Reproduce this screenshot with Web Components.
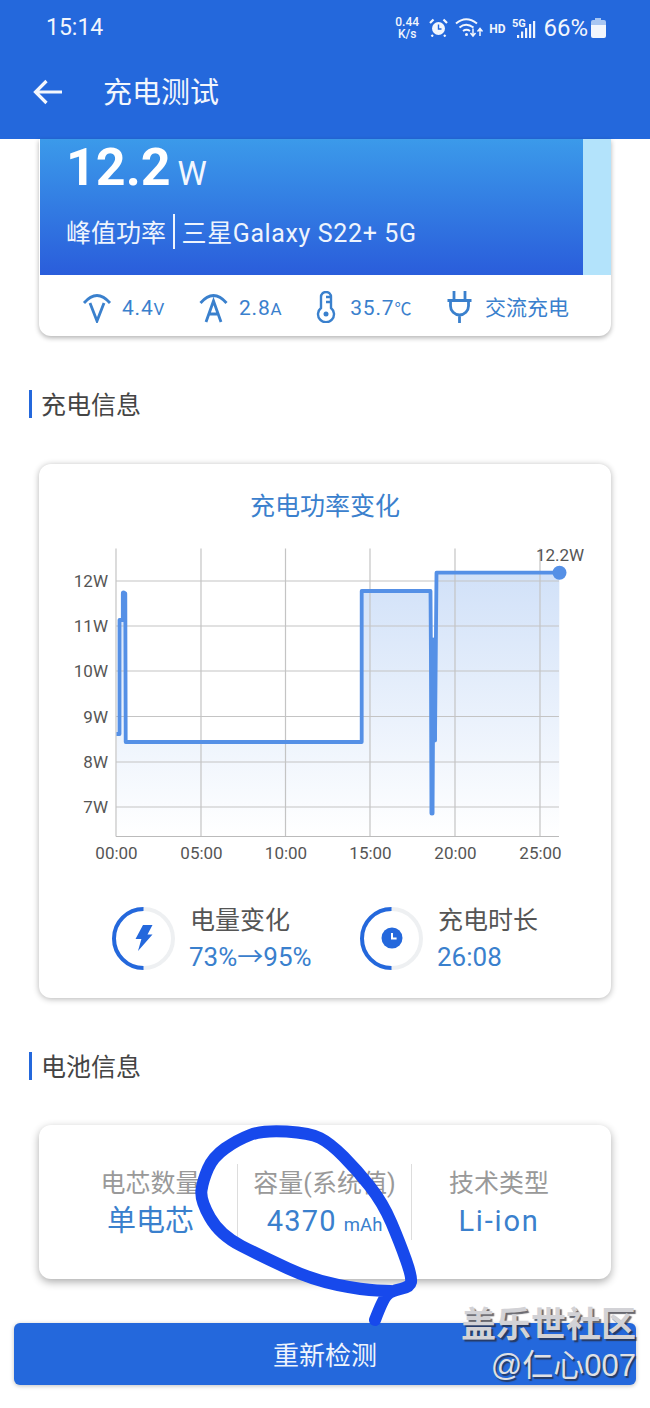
<!DOCTYPE html>
<html lang="zh">
<head>
<meta charset="utf-8">
<title>充电测试</title>
<style>
  html, body { margin: 0; background: #fff; }
  body { font-family: Roboto, "Noto Sans CJK SC", sans-serif; }
</style>
</head>
<body>
<x-app>
  <x-status-bar></x-status-bar>
  <x-app-bar>充电测试</x-app-bar>
  <x-hero-card></x-hero-card>
  <x-section-title style="margin-top:54px">充电信息</x-section-title>
  <x-chart-card style="margin-top:46px">
    <x-stat>
      <svg slot="icon" width="18" height="26" viewBox="0 0 18 26"><path fill="#2468dc" d="M8 0h9.500l-5 9.500h5L3 26l3.400-12H0.500z"/></svg>
      <span slot="label">电量变化</span>
      <span slot="value">73%→95%</span>
    </x-stat>
    <x-stat>
      <svg slot="icon" width="22" height="22" viewBox="0 0 22 22"><circle cx="11" cy="11" r="10.500" fill="#2468dc"/><path d="M11 6v5.600h4.600" fill="none" stroke="#fff" stroke-width="2"/></svg>
      <span slot="label">充电时长</span>
      <span slot="value">26:08</span>
    </x-stat>
  </x-chart-card>
  <x-section-title style="margin-top:54px">电池信息</x-section-title>
  <x-battery-card style="margin-top:45px">
    <x-spec label="电芯数量">单电芯</x-spec>
    <x-spec label="容量(系统值)"><span style="letter-spacing:1.200px">4370</span> <small style="font-size:18.500px">mAh</small></x-spec>
    <x-spec label="技术类型"><span style="letter-spacing:1.800px">Li-ion</span></x-spec>
  </x-battery-card>
  <x-action-button style="margin-top:44px">重新检测</x-action-button>
  <x-scribble slot="over"></x-scribble>
  <x-watermark slot="over"></x-watermark>
</x-app>

<script>
(function() {

  const FONT = 'Roboto, "Noto Sans CJK SC", sans-serif';
  const BLUE = '#2468dc';
  const TEXT_BLUE = '#3a80cd';

  function ui(tag, css, html) {
    customElements.define(tag, class extends HTMLElement {
      constructor() {
        super();
        this.attachShadow({ mode: 'open' }).innerHTML =
          `<style>${ css }</style>${ typeof html === 'function' ? html(this) : html }`;
      }
    });
  }

  ui('x-app', `
    :host {
      display: block;
      position: relative;
      width: 650px;
      height: 1408px;
      overflow: hidden;
      background: #fff;
      font-family: ${ FONT };
    }
    .flow { display: flex; flex-direction: column; }
  `, `<div class="flow"><slot></slot></div><slot name="over"></slot>`);

  ui('x-status-bar', `
    :host {
      display: flex;
      align-items: center;
      height: 55px;
      padding: 0 44px 0 46px;
      background: ${ BLUE };
      color: #f2f6fd;
    }
    .time { font-size: 23px; flex: 1; }
    .net { font-size: 12px; line-height: 12px; font-weight: 500; text-align: center; width: 26px; }
    svg { display: block; }
    .hd { font-size: 12px; font-weight: 700; margin: 2px 0 0 5px; }
    .pct { font-size: 24px; margin-left: 7px; }
  `, `
    <span class="time">15:14</span>
    <div class="net">0.44<br>K/s</div>
    <svg style="margin-left:9px" width="19" height="19" viewBox="0 0 19 19">
      <circle cx="9.500" cy="10.500" r="6.500" fill="#f2f6fd"/>
      <path d="M9.500 6.500v4.500h3" fill="none" stroke="${ BLUE }" stroke-width="1.400"/>
      <path d="M1 5l3.500-3.500M18 5l-3.500-3.500M4 17l-1.500 1.500M15 17l1.500 1.500" stroke="#f2f6fd" stroke-width="2.200" fill="none"/>
    </svg>
    <svg style="margin-left:7px" width="29" height="21" viewBox="0 0 29 21" fill="none" stroke="#f2f6fd" stroke-width="2">
      <path d="M1 6.500Q11-2 22 6.500M4.500 10.500Q11 5 18.500 10.500M8 14q3.500-2.500 7 0"/>
      <circle cx="11.500" cy="17.500" r="1.500" fill="#f2f6fd" stroke="none"/>
      <path d="M18 11.500v7M15.500 16l2.500 3 2.500-3M25 19v-7M22.500 14.500l2.500-3 2.500 3" stroke-width="1.500"/>
    </svg>
    <span class="hd">HD</span>
    <svg style="margin-left:7px" width="24" height="20" viewBox="0 0 24 20">
      <text x="0" y="9" font-family="Roboto, sans-serif" font-size="11" font-weight="700" fill="#f2f6fd">5G</text>
      <path fill="#f2f6fd" d="M5 17h2.200v3H5zM9 13.500h2.200V20H9zM13 10h2.200v10H13zM17 6h2.200v14H17zM21 3h2.200v17H21z"/>
    </svg>
    <span class="pct">66%</span>
    <svg style="margin-left:3px" width="15" height="20" viewBox="0 0 15 20">
      <path fill="#a8c6f2" d="M4 0h6v2h3a2 2 0 0 1 2 2v3H0V4a2 2 0 0 1 2-2h2z"/>
      <path fill="#f2f6fd" d="M0 7h15v11a2 2 0 0 1-2 2H2a2 2 0 0 1-2-2z"/>
    </svg>
  `);

  ui('x-app-bar', `
    :host {
      display: flex;
      align-items: center;
      gap: 41px;
      height: 84px;
      padding: 0 0 11px 33px;
      box-sizing: border-box;
      background: ${ BLUE };
      color: #f2f6fd;
      font-size: 29px;
    }
    svg { display: block; }
    span { margin-top: -3px; }
  `, `
    <svg width="29" height="26" viewBox="0 0 29 26" fill="none" stroke="#f4f7fd" stroke-width="3.200">
      <path d="M29 13H3M13.500 2 2.500 13l11 11"/>
    </svg>
    <span><slot></slot></span>
  `);

  ui('x-hero-card', `
    :host {
      display: block;
      width: 572px;
      margin-left: 39px;
      background: #fff;
      border-radius: 0 0 12px 12px;
      box-shadow: 0 2px 5px rgba(0,0,0,.3);
    }
    .top { display: flex; height: 136px; margin-left: 1px; background: #b3e3fb; }
    .hero {
      width: 543px;
      box-sizing: border-box;
      padding: 3px 0 0 26px;
      background: linear-gradient(#3b9aea, #2a5ddb);
      color: #fff;
    }
    .val { display: flex; align-items: baseline; gap: 7px; height: 52px; line-height: 52px; }
    .val b { font-size: 52px; font-weight: 700; }
    .val span { font-size: 33px; color: #f3f7fe; }
    .sub { display: flex; align-items: center; gap: 7px; height: 36px; margin-top: 19px; font-size: 25px; color: #eef4fd; }
    .sub i { width: 1.500px; height: 35px; background: #eef4fd; }
    .sub em { font-style: normal; letter-spacing: .62px; }
    .row {
      display: flex;
      justify-content: space-between;
      align-items: center;
      height: 61px;
      box-sizing: border-box;
      padding: 2px 42px 0 43px;
      color: ${ TEXT_BLUE };
      font-size: 21px;
    }
    .m { display: flex; align-items: center; }
    .m svg { display: block; fill: none; stroke: ${ TEXT_BLUE }; stroke-width: 2.800; margin-right: 10px; }
    .m span { margin-top: 2px; }
    .m span.cn { margin-top: -2px; }
    .m b { font-weight: 400; letter-spacing: .8px; }
    .m u { text-decoration: none; font-size: 17px; }
  `, `
    <div class="top">
      <div class="hero">
        <div class="val"><b>12.2</b><span>W</span></div>
        <div class="sub"><span>峰值功率</span><i></i><em>三星Galaxy S22+ 5G</em></div>
      </div>
    </div>
    <div class="row">
      <div class="m">
        <svg width="30" height="32" viewBox="0 0 30 32"><path d="M2 12Q15-3 28 12M8 12l7 18 7-18"/></svg>
        <span><b>4.4</b><u>V</u></span>
      </div>
      <div class="m">
        <svg style="margin-right:11px" width="29" height="32" viewBox="0 0 29 32"><path d="M1.500 12Q14.500-3 27.500 12M7 31 14.500 10 22 31M9.500 23h10"/></svg>
        <span><b>2.8</b><u>A</u></span>
      </div>
      <div class="m">
        <svg style="stroke-width:2.400;margin-right:14px" width="20" height="32" viewBox="0 0 20 32">
          <path d="M5 17V6a5 5 0 0 1 10 0v11a8 8 0 1 1-10 0zM10 6h5M10 11h5"/>
          <circle cx="10" cy="23" r="2.500" fill="${ TEXT_BLUE }" stroke="none"/>
        </svg>
        <span><b>35.7</b><u>℃</u></span>
      </div>
      <div class="m">
        <svg style="margin-right:12px" width="27" height="32" viewBox="0 0 27 32"><path d="M8 0v9M19 0v9M1.500 9.500h24M4.500 9.500V15a9 9 0 0 0 18 0V9.500M13.500 24v8"/></svg>
        <span class="cn">交流充电</span>
      </div>
    </div>
  `);

  ui('x-section-title', `
    :host {
      display: flex;
      align-items: center;
      gap: 9px;
      height: 28px;
      margin-left: 29px;
      font-size: 25px;
      color: #444;
    }
    i { width: 3px; height: 28px; background: ${ BLUE }; }
    span { margin-top: -2px; }
  `, `<i></i><span><slot></slot></span>`);

  ui('x-chart-card', `
    :host {
      display: block;
      width: 572px;
      height: 534px;
      margin-left: 39px;
      box-sizing: border-box;
      padding-top: 28px;
      background: #fff;
      border-radius: 12px;
      box-shadow: 0 1px 6px rgba(0,0,0,.3);
    }
    h2 { margin: 0; height: 30px; line-height: 30px; text-align: center; font-size: 25px; font-weight: 400; color: ${ TEXT_BLUE }; }
    .stats { display: flex; padding: 34px 0 0 73px; }
    x-power-chart { margin-top: 8px; }
  `, `
    <h2>充电功率变化</h2>
    <x-power-chart></x-power-chart>
    <div class="stats"><slot></slot></div>
  `);

  ui('x-power-chart', `
    :host { display: block; height: 340px; }
    svg { display: block; }
    text { font-family: Roboto, sans-serif; fill: #555; }
  `, () => {
    const xs = [116, 201, 285.5, 370, 455, 540];
    const ys = [581, 626, 671, 716.5, 762, 807];
    const xl = ['00:00', '05:00', '10:00', '15:00', '20:00', '25:00'];
    const yl = ['12W', '11W', '10W', '9W', '8W', '7W'];
    const pts = 'M116.500 734H119.500V620H122.800V593.500H125.300L125.700 742H361.700V591H430.500L432 813L434 641.700L435 740L436.500 572.700H559.300';
    return `
      <svg width="572" height="340" viewBox="39 530 572 340">
        <defs>
          <linearGradient id="area" gradientUnits="userSpaceOnUse" x1="0" y1="573" x2="0" y2="836">
            <stop offset="0" stop-color="#5590e6" stop-opacity=".27"/>
            <stop offset="1" stop-color="#5590e6" stop-opacity="0"/>
          </linearGradient>
        </defs>
        <path d="${ pts }V836.500H116.500z" fill="url(#area)"/>
        <g stroke="#c4c4c4" stroke-width="1.200" fill="none">
          ${ xs.map(x => `<path d="M${ x } 548.500V836.500"/>`).join('') }
          ${ ys.map(y => `<path d="M116 ${ y }H559"/>`).join('') }
          <path d="M116 836.500H559" stroke="#bbb"/>
        </g>
        <path d="${ pts }" fill="none" stroke="#5590e6" stroke-width="3.800" stroke-linejoin="round"/>
        <path d="M432 640V813M434.300 640V740M123.500 593V616" fill="none" stroke="#5590e6" stroke-width="5" stroke-linecap="round"/>
        <circle cx="559.500" cy="572.700" r="7" fill="#5590e6"/>
        ${ yl.map((t, i) => `<text x="108" y="${ ys[i] + 6 }" text-anchor="end" font-size="17">${ t }</text>`).join('') }
        ${ xl.map((t, i) => `<text x="${ xs[i] + .5 }" y="859" text-anchor="middle" font-size="17">${ t }</text>`).join('') }
        <text x="560" y="561" text-anchor="middle" font-size="17">12.2W</text>
      </svg>
    `;
  });

  ui('x-stat', `
    :host { display: flex; align-items: center; width: 248px; }
    .ring { position: relative; width: 63px; height: 63px; margin-right: 15px; flex: none; display: grid; place-items: center; }
    .ring svg { position: absolute; inset: 0; }
    ::slotted([slot="icon"]) { position: relative; }
    .txt { display: flex; flex-direction: column; gap: 6px; margin-top: 2px; }
    .l { font-size: 25px; line-height: 30px; color: #555; }
    .v { font-size: 26px; line-height: 30px; color: ${ TEXT_BLUE }; margin-left: -1px; }
  `, `
    <div class="ring">
      <svg width="63" height="63" viewBox="0 0 63 63" fill="none" stroke-width="4">
        <circle cx="31.500" cy="31.500" r="29.500" stroke="#eef0f2"/>
        <path d="M31.500 2a29.500 29.500 0 0 0 0 59" stroke="${ BLUE }"/>
      </svg>
      <slot name="icon"></slot>
    </div>
    <div class="txt">
      <div class="l"><slot name="label"></slot></div>
      <div class="v"><slot name="value"></slot></div>
    </div>
  `);

  ui('x-battery-card', `
    :host {
      display: block;
      width: 572px;
      height: 154px;
      margin-left: 39px;
      box-sizing: border-box;
      padding: 39px 25px 0;
      background: #fff;
      border-radius: 12px;
      box-shadow: 0 3px 8px rgba(0,0,0,.33);
    }
    .grid { display: grid; grid-template-columns: repeat(3, 174px); }
    ::slotted(x-spec:not(:last-child)) { border-right: 1px solid #ddd; }
  `, `<div class="grid"><slot></slot></div>`);

  ui('x-spec', `
    :host { display: block; height: 76px; text-align: center; }
    .l { font-size: 25px; line-height: 38px; margin-top: 1px; color: #999; white-space: nowrap; }
    .v { font-size: 29px; line-height: 37px; color: ${ TEXT_BLUE }; white-space: nowrap; }
  `, el => `<div class="l">${ el.getAttribute('label') }</div><div class="v"><slot></slot></div>`);

  ui('x-action-button', `
    :host {
      display: flex;
      align-items: center;
      justify-content: center;
      width: 622px;
      height: 62px;
      box-sizing: border-box;
      padding-bottom: 2px;
      margin-left: 14px;
      background: ${ BLUE };
      border-radius: 6px;
      box-shadow: 0 1px 4px rgba(0,0,0,.25);
      color: #eef4fd;
      font-size: 26px;
    }
  `, `<slot></slot>`);

  ui('x-scribble', `
    :host { position: absolute; inset: 0; pointer-events: none; }
    svg { display: block; }
  `, () => {
    const p = [[375,1320],[383,1299],[391,1291],[410,1287],[412,1277],[400,1243],[383,1203],[357,1170],[330,1143],[310,1133],[263,1130],[237,1140],[213,1157],[203,1180],[200,1200],[220,1235],[263,1257],[313,1280],[363,1290],[391,1291]];
    let d = `M${ p[0] }`;
    for (let i = 1; i < p.length - 1; i++) {
      const mx = (p[i][0] + p[i + 1][0]) / 2, my = (p[i][1] + p[i + 1][1]) / 2;
      d += `Q${ p[i] } ${ mx } ${ my }`;
    }
    d += `L${ p[p.length - 1] }`;
    return `<svg width="650" height="1408"><path d="${ d }" fill="none" stroke="#1749ec" stroke-width="12" stroke-linecap="round" stroke-linejoin="round"/></svg>`;
  });

  ui('x-watermark', `
    :host {
      position: absolute;
      right: 14px;
      top: 1304px;
      text-align: right;
      font-family: "Liberation Sans", "Noto Sans CJK SC", sans-serif;
      color: #d2d2d6;
      white-space: nowrap;
    }
    .a { font-size: 35px; line-height: 42px; font-weight: 700; text-shadow: 2px 2px 1px rgba(40,40,50,.7); }
    .b { font-size: 31px; line-height: 36px; margin-top: 2px; text-shadow: 1.500px 1.500px 1px rgba(40,40,50,.7); color: #dfe0e4; }
  `, `<div class="a">盖乐世社区</div><div class="b">@仁心007</div>`);

}());
</script>
</body>
</html>
